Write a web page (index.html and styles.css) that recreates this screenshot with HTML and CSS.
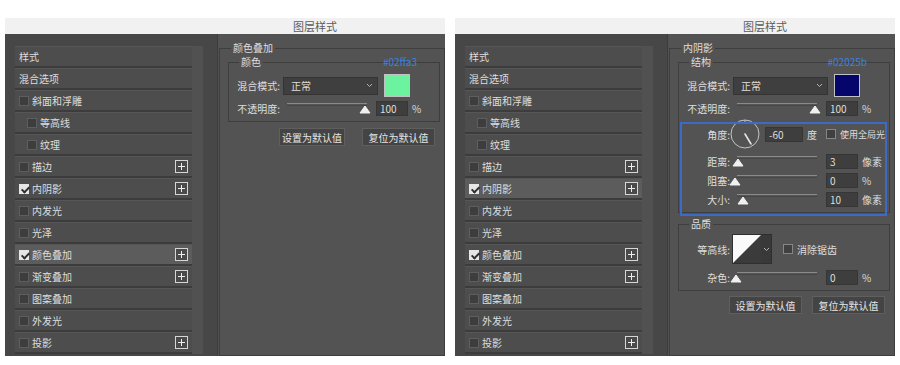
FILE: index.html
```html
<!DOCTYPE html>
<html lang="zh-CN">
<head>
  <meta charset="UTF-8" />
  <title>图层样式</title>
  <link rel="stylesheet" href="styles.css">
</head>
<body>

<div class="page">

  <!-- left: colour overlay -->
  <div class="dialog">
    <div class="titlebar">图层样式</div>
    <div class="dlg-body">
      <ul class="fx-list">
        <li class="fx-row">样式</li>
        <li class="fx-row">混合选项</li>
        <li class="fx-row"><i class="cb"></i>斜面和浮雕</li>
        <li class="fx-row sub"><i class="cb"></i>等高线</li>
        <li class="fx-row sub"><i class="cb"></i>纹理</li>
        <li class="fx-row"><i class="cb"></i>描边<b class="plus"></b></li>
        <li class="fx-row"><i class="cb on"></i>内阴影<b class="plus"></b></li>
        <li class="fx-row"><i class="cb"></i>内发光</li>
        <li class="fx-row"><i class="cb"></i>光泽</li>
        <li class="fx-row active"><i class="cb on"></i>颜色叠加<b class="plus"></b></li>
        <li class="fx-row"><i class="cb"></i>渐变叠加<b class="plus"></b></li>
        <li class="fx-row"><i class="cb"></i>图案叠加</li>
        <li class="fx-row"><i class="cb"></i>外发光</li>
        <li class="fx-row"><i class="cb"></i>投影<b class="plus"></b></li>
      </ul>
      <div class="fx-scroll"></div>

      <div class="settings">
        <fieldset class="group outer">
          <legend>颜色叠加</legend>
          <fieldset class="group inner">
            <legend>颜色</legend>
            <span class="hex">#02ffa3</span>
            <div class="row tall">
              <span class="lbl">混合模式:</span>
              <div class="select"><span>正常</span><svg width="7" height="5" viewBox="0 0 7 5"><path d="M1 1 L3.5 3.5 L6 1" fill="none" stroke="#b5b5b5" stroke-width="1"/></svg></div>
              <div class="swatch green"></div>
            </div>
            <div class="row">
              <span class="lbl">不透明度:</span>
              <svg class="slider" width="88" height="15" viewBox="0 0 88 15">
                <rect x="4" y="2" width="80" height="1.5" fill="#8a8a8a"/>
                <rect x="4" y="3.5" width="80" height="1" fill="#3a3a3a"/>
                <path d="M77 12 L82 5 L87 12 Z" fill="#f0f0f0" stroke="#f0f0f0" stroke-linejoin="round"/>
              </svg>
              <span class="num">100</span>
              <span class="unit">%</span>
            </div>
          </fieldset>
          <div class="btns">
            <button class="btn">设置为默认值</button>
            <button class="btn wide">复位为默认值</button>
          </div>
        </fieldset>
      </div>
    </div>
  </div>

  <!-- right: inner shadow -->
  <div class="dialog">
    <div class="titlebar">图层样式</div>
    <div class="dlg-body">
      <ul class="fx-list">
        <li class="fx-row">样式</li>
        <li class="fx-row">混合选项</li>
        <li class="fx-row"><i class="cb"></i>斜面和浮雕</li>
        <li class="fx-row sub"><i class="cb"></i>等高线</li>
        <li class="fx-row sub"><i class="cb"></i>纹理</li>
        <li class="fx-row"><i class="cb"></i>描边<b class="plus"></b></li>
        <li class="fx-row active"><i class="cb on"></i>内阴影<b class="plus"></b></li>
        <li class="fx-row"><i class="cb"></i>内发光</li>
        <li class="fx-row"><i class="cb"></i>光泽</li>
        <li class="fx-row"><i class="cb on"></i>颜色叠加<b class="plus"></b></li>
        <li class="fx-row"><i class="cb"></i>渐变叠加<b class="plus"></b></li>
        <li class="fx-row"><i class="cb"></i>图案叠加</li>
        <li class="fx-row"><i class="cb"></i>外发光</li>
        <li class="fx-row"><i class="cb"></i>投影<b class="plus"></b></li>
      </ul>
      <div class="fx-scroll"></div>

      <div class="settings">
        <fieldset class="group outer">
          <legend>内阴影</legend>
          <fieldset class="group inner">
            <legend>结构</legend>
            <span class="hex">#02025b</span>
            <div class="row tall">
              <span class="lbl">混合模式:</span>
              <div class="select"><span>正常</span><svg width="7" height="5" viewBox="0 0 7 5"><path d="M1 1 L3.5 3.5 L6 1" fill="none" stroke="#b5b5b5" stroke-width="1"/></svg></div>
              <div class="swatch navy"></div>
            </div>
            <div class="row">
              <span class="lbl">不透明度:</span>
              <svg class="slider" width="88" height="15" viewBox="0 0 88 15">
                <rect x="4" y="2" width="80" height="1.5" fill="#8a8a8a"/>
                <rect x="4" y="3.5" width="80" height="1" fill="#3a3a3a"/>
                <path d="M77 12 L82 5 L87 12 Z" fill="#f0f0f0" stroke="#f0f0f0" stroke-linejoin="round"/>
              </svg>
              <span class="num">100</span>
              <span class="unit">%</span>
            </div>

            <div class="hl">
              <div class="row angle">
                <span class="lbl">角度:</span>
                <svg class="dial" width="30" height="30" viewBox="0 0 30 30">
                  <circle cx="15" cy="15" r="14" fill="none" stroke="#c4c4c4" stroke-width="1"/>
                  <path d="M15 1 L15 3" stroke="#c4c4c4" stroke-width="1"/>
                  <path d="M15 15 L21 25" stroke="#e6e6e6" stroke-width="1.6" stroke-linecap="round"/>
                </svg>
                <span class="num deg">-60</span>
                <span class="unit">度</span>
                <i class="cbx"></i>
                <span class="cbx-lbl small">使用全局光</span>
              </div>
              <div class="row">
                <span class="lbl">距离:</span>
                <svg class="slider" width="88" height="15" viewBox="0 0 88 15">
                  <rect x="4" y="2" width="80" height="1.5" fill="#8a8a8a"/>
                  <rect x="4" y="3.5" width="80" height="1" fill="#3a3a3a"/>
                  <path d="M0 12 L5 5 L10 12 Z" fill="#f0f0f0" stroke="#f0f0f0" stroke-linejoin="round"/>
                </svg>
                <span class="num">3</span>
                <span class="unit">像素</span>
              </div>
              <div class="row">
                <span class="lbl">阻塞:</span>
                <svg class="slider" width="88" height="15" viewBox="0 0 88 15">
                  <rect x="4" y="2" width="80" height="1.5" fill="#8a8a8a"/>
                  <rect x="4" y="3.5" width="80" height="1" fill="#3a3a3a"/>
                  <path d="M-3 12 L2 5 L7 12 Z" fill="#f0f0f0" stroke="#f0f0f0" stroke-linejoin="round"/>
                </svg>
                <span class="num">0</span>
                <span class="unit">%</span>
              </div>
              <div class="row">
                <span class="lbl">大小:</span>
                <svg class="slider" width="88" height="15" viewBox="0 0 88 15">
                  <rect x="4" y="2" width="80" height="1.5" fill="#8a8a8a"/>
                  <rect x="4" y="3.5" width="80" height="1" fill="#3a3a3a"/>
                  <path d="M5 12 L10 5 L15 12 Z" fill="#f0f0f0" stroke="#f0f0f0" stroke-linejoin="round"/>
                </svg>
                <span class="num">10</span>
                <span class="unit">像素</span>
              </div>
            </div>
          </fieldset>

          <fieldset class="group inner quality">
            <legend>品质</legend>
            <div class="row angle">
              <span class="lbl">等高线:</span>
              <div class="contour">
                <svg width="28" height="28" viewBox="0 0 28 28">
                  <rect width="28" height="28" fill="#fafafa"/>
                  <path d="M28 0 L28 28 L0 28 Z" fill="#3b3b3b"/>
                </svg>
                <div class="contour-dd"><svg width="7" height="5" viewBox="0 0 7 5"><path d="M1 1 L3.5 3.5 L6 1" fill="none" stroke="#b5b5b5" stroke-width="1"/></svg></div>
              </div>
              <i class="cbx aa"></i>
              <span class="cbx-lbl">消除锯齿</span>
            </div>
            <div class="row noise">
              <span class="lbl">杂色:</span>
              <svg class="slider" width="88" height="15" viewBox="0 0 88 15">
                <rect x="4" y="2" width="80" height="1.5" fill="#8a8a8a"/>
                <rect x="4" y="3.5" width="80" height="1" fill="#3a3a3a"/>
                <path d="M-2 12 L3 5 L8 12 Z" fill="#f0f0f0" stroke="#f0f0f0" stroke-linejoin="round"/>
              </svg>
              <span class="num">0</span>
              <span class="unit">%</span>
            </div>
          </fieldset>

          <div class="btns right">
            <button class="btn">设置为默认值</button>
            <button class="btn">复位为默认值</button>
          </div>
        </fieldset>
      </div>
    </div>
  </div>

</div>

</body>
</html>
```

FILE: styles.css
```css
* {
  box-sizing: border-box;
}
body {
  margin: 0;
  background: #fff;
  font-family: "Noto Sans CJK SC", "Noto Sans", sans-serif;
  font-size: 10px;
  color: #dedede;
}
.page {
  display: flex;
  gap: 10px;
  padding: 18px 0 0 5px;
}
.dialog {
  width: 440px;
  height: 338px;
  display: flex;
  flex-direction: column;
}
.titlebar {
  height: 16px;
  background: #f1f1f1;
  color: #5c5c5c;
  font-size: 11px;
  line-height: 16px;
  padding-left: 288px;
}
.dlg-body {
  flex: 1;
  display: flex;
  background: #474747;
  padding-left: 10px;
  overflow: hidden;
}

/* effect list */
.fx-list {
  list-style: none;
  margin: 12px 0 0;
  padding: 0;
  width: 177px;
}
.fx-row {
  height: 22px;
  display: flex;
  align-items: center;
  padding-left: 4px;
  background: #4d4d4d;
  border-top: 1px solid #565656;
  border-bottom: 2px solid #3c3c3c;
  white-space: nowrap;
}
.fx-row.sub {
  padding-left: 12px;
}
.fx-row.active {
  background: #5c5c5c;
}
.cb {
  width: 10px;
  height: 10px;
  margin-right: 3px;
  background: #3d3d3d;
  border: 1px solid #5e5e5e;
}
.cb.on {
  background: #e6e6e6;
  border-color: #e6e6e6;
}
.cb.on::after {
  content: "";
  display: block;
  width: 3px;
  height: 6px;
  margin: 0 0 0 2.5px;
  border: solid #2e2e2e;
  border-width: 0 2px 2px 0;
  transform: rotate(45deg);
}
.plus {
  margin-left: auto;
  margin-right: 4px;
  width: 13px;
  height: 13px;
  border: 1px solid #d6d6d6;
  background:
    linear-gradient(#eee, #eee) center / 7px 1px no-repeat,
    linear-gradient(#eee, #eee) center / 1px 7px no-repeat,
    #4a4a4a;
}
.fx-scroll {
  width: 11px;
  height: 308px;
  margin-top: 12px;
  background: #515151;
}

/* settings side */
.settings {
  flex: 1;
  margin-left: 14px;
  background: #535353;
  border-left: 1px solid #3c3c3c;
  padding: 7px 0 0 1px;
}
.group {
  margin: 0;
  min-width: 0;
  border: 1px solid #3e3e3e;
}
.group > legend {
  padding: 0 2px;
  line-height: 14px;
}
.outer {
  height: 315px;
  padding: 0 0 0 8px;
}
.outer > legend {
  margin-left: 3px;
}
.inner {
  position: relative;
  width: 212px;
  padding: 0 4px 5px 3px;
}
.inner > legend {
  margin-left: 7px;
}
.hex {
  position: absolute;
  top: -14px;
  right: 22px;
  color: #3d82de;
  line-height: 14px;
}

.row {
  display: flex;
  align-items: center;
  height: 15px;
  margin-top: 4px;
  white-space: nowrap;
}
.row.tall {
  height: 23px;
  margin-top: 5px;
}
.lbl {
  width: 48px;
  margin-right: 3px;
  text-align: right;
}
.select {
  width: 95px;
  height: 18px;
  display: flex;
  align-items: center;
  justify-content: space-between;
  padding: 0 4px 0 7px;
  background: #3f3f3f;
  border: 1px solid #343434;
}
.swatch {
  width: 26px;
  height: 23px;
  margin-left: 6px;
  border: 1px solid #c2c2c2;
}
.swatch.green {
  background: #6cf3a0;
}
.swatch.navy {
  background: #05056b;
}
.slider {
  overflow: visible;
}
.num {
  width: 32px;
  height: 15px;
  margin-left: 5px;
  padding-left: 3px;
  line-height: 13px;
  background: #3e3e3e;
  border: 1px solid #363636;
}
.unit {
  margin-left: 4px;
}

/* blue annotation box */
.hl {
  position: relative;
  padding-top: 3px;
}
.hl::after {
  content: "";
  position: absolute;
  top: 6px;
  left: -2px;
  right: -2px;
  bottom: -9px;
  border: 2px solid #3b6bc4;
}
.row.angle {
  height: 30px;
  margin-top: 0;
}
.dial {
  margin-left: -3px;
}
.num.deg {
  width: 38px;
}
.row.angle + .row {
  margin-top: 5px;
}
.cbx {
  width: 10px;
  height: 10px;
  margin-left: 9px;
  background: #404040;
  border: 1px solid #868686;
}
.cbx-lbl {
  margin-left: 4px;
}
.cbx-lbl.small {
  font-size: 9px;
}

.quality {
  margin-top: 4px;
}
.quality .row.angle {
  margin-top: 3px;
}
.quality .row.noise {
  margin-top: 6px;
}
.contour {
  display: flex;
  height: 30px;
  margin-left: -1px;
  border: 1px solid #2f2f2f;
}
.contour-dd {
  width: 10px;
  display: flex;
  align-items: center;
  justify-content: center;
  background: #393939;
}
.cbx.aa {
  margin-left: 11px;
}

.btns {
  display: flex;
  gap: 17px;
  margin: 6px 0 0 51px;
}
.btns.right {
  gap: 10px;
  margin-top: 5px;
}
.btn {
  width: 66px;
  height: 18px;
  padding: 0;
  font: inherit;
  color: #e6e6e6;
  background: #444;
  border: 1px solid #5f5f5f;
}
.btn.wide,
.btns.right .btn {
  width: 73px;
}
```
